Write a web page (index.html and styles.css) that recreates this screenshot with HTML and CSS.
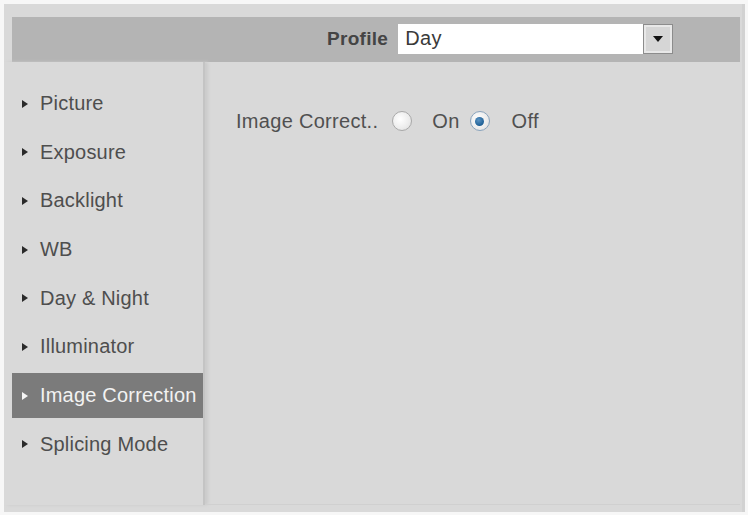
FILE: index.html
```html
<!DOCTYPE html>
<html>

<head>
    <meta charset="utf-8">
    <title>Image Correction</title>
    <link rel="stylesheet" href="styles.css">
</head>

<body>
    <div class="panel">
        <div class="toolbar">
            <span class="toolbar-label">Profile</span>
            <div class="select">
                <span class="select-value">Day</span>
                <span class="select-btn"><span class="arrow-down"></span></span>
            </div>
        </div>
        <div class="main">
            <ul class="menu">
                <li class="menu-item">Picture</li>
                <li class="menu-item">Exposure</li>
                <li class="menu-item">Backlight</li>
                <li class="menu-item">WB</li>
                <li class="menu-item">Day &amp; Night</li>
                <li class="menu-item">Illuminator</li>
                <li class="menu-item active">Image Correction</li>
                <li class="menu-item">Splicing Mode</li>
            </ul>
            <div class="content">
                <div class="field">
                    <span class="field-label">Image Correct..</span>
                    <span class="radio"></span>
                    <span class="radio-text">On</span>
                    <span class="radio checked"></span>
                    <span class="radio-text">Off</span>
                </div>
            </div>
        </div>
    </div>
</body>

</html>
```

FILE: styles.css
```css
* {
    box-sizing: border-box;
    margin: 0;
    padding: 0;
}

body {
    background-color: #f7f7f7;
    font-family: "Liberation Sans", Arial, sans-serif;
    color: #505050;
}

.panel {
    margin: 4px 0 0 4px;
    width: 741px;
    height: 508px;
    background-color: #d9d9d9;
    border-right: 3px solid #d2d2d2;
    padding: 13px 2px 0 8px;
    display: flex;
    flex-direction: column;
}

.toolbar {
    height: 45px;
    background-color: #b4b4b4;
    display: flex;
    align-items: center;
    padding-left: 315px;
}

.toolbar-label {
    font-size: 19px;
    font-weight: bold;
    letter-spacing: 0.3px;
    color: #444;
    margin-right: 10px;
    margin-top: -2px;
}

.select {
    width: 275px;
    height: 30px;
    background-color: #fff;
    display: flex;
    align-items: center;
    margin-top: -2px;
}

.select-value {
    flex: 1;
    padding-left: 7px;
    font-size: 20px;
    letter-spacing: 0.3px;
    color: #3a3a3a;
}

.select-btn {
    width: 30px;
    height: 30px;
    border: 1px solid #8c8c8c;
    box-shadow: inset 0 0 0 2px #e8e8e8;
    background-color: #d6d6d6;
    display: flex;
    align-items: center;
    justify-content: center;
}

.arrow-down {
    width: 0;
    height: 0;
    border-left: 5px solid transparent;
    border-right: 5px solid transparent;
    border-top: 6px solid #111;
}

.main {
    flex: 1;
    display: flex;
    margin-left: -8px;
    padding-bottom: 7px;
}

.menu {
    list-style: none;
    width: 201px;
    padding: 19px 0 0 8px;
    border-right: 2px solid #c4c4c4;
    box-shadow: 3px 0 3px #cbcbcb;
    display: flex;
    flex-direction: column;
    gap: 3.7px;
}

.menu-item {
    height: 45px;
    display: flex;
    align-items: center;
    padding-left: 10px;
    font-size: 20px;
    letter-spacing: 0.2px;
    color: #4e4e4e;
}

.menu-item::before {
    content: "";
    width: 0;
    height: 0;
    border-top: 4.5px solid transparent;
    border-bottom: 4.5px solid transparent;
    border-left: 6px solid #2a2a2a;
    margin-right: 12px;
}

.menu-item.active {
    background-color: #7b7b7b;
    color: #f2f2f2;
}

.menu-item.active::before {
    border-left-color: #f5f5f5;
}

.content {
    flex: 1;
    padding: 47px 0 0 31px;
    border-bottom: 1px solid #d0d0d0;
}

.field {
    display: flex;
    align-items: center;
    height: 24px;
    font-size: 20px;
    letter-spacing: 0.3px;
    color: #505050;
}

.radio {
    width: 20px;
    height: 20px;
    border-radius: 50%;
    border: 1px solid #a9a9a9;
    background: radial-gradient(circle at 40% 40%, #ffffff 0%, #ececec 60%, #d8d8d8 100%);
    margin-left: 14px;
    display: flex;
    align-items: center;
    justify-content: center;
}

.radio.checked {
    margin-left: 10px;
    border-color: #8aa4bd;
}

.radio.checked::after {
    content: "";
    width: 9px;
    height: 9px;
    border-radius: 50%;
    background: radial-gradient(circle at 40% 35%, #5b94c4 0%, #1e5f95 70%);
}

.radio-text {
    margin-left: 20px;
}

.radio.checked + .radio-text {
    margin-left: 22px;
}
```
